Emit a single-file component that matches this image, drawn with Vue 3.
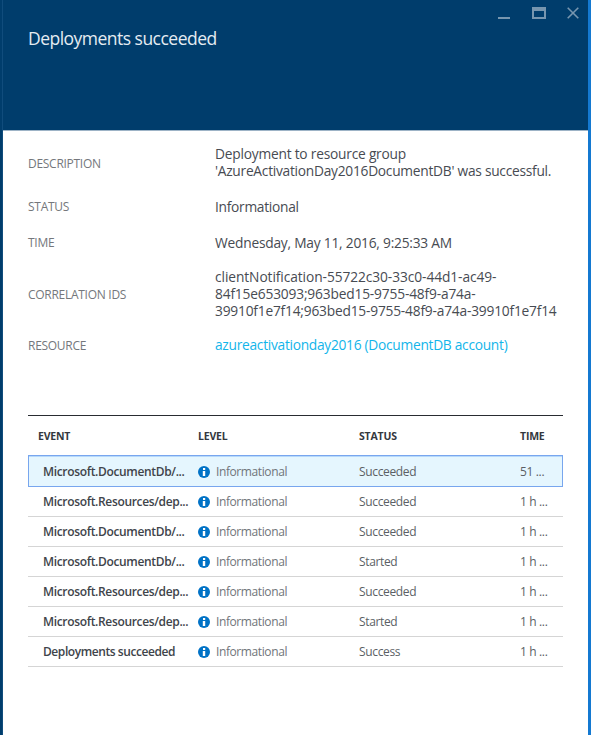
<script setup>
const details = [
  { label: 'DESCRIPTION', cls: 'description', lines: ['Deployment to resource group', "'AzureActivationDay2016DocumentDB' was successful."] },
  { label: 'STATUS', cls: 'status', lines: ['Informational'] },
  { label: 'TIME', cls: 'time', lines: ['Wednesday, May 11, 2016, 9:25:33 AM'] },
  { label: 'CORRELATION IDS', cls: 'correlation', lines: ['clientNotification-55722c30-33c0-44d1-ac49-', '84f15e653093;963bed15-9755-48f9-a74a-', '39910f1e7f14;963bed15-9755-48f9-a74a-39910f1e7f14'] },
  { label: 'RESOURCE', cls: 'resource', lines: ['azureactivationday2016 (DocumentDB account)'] }
]
const db = 'Microsoft.DocumentDb/...'
const res = 'Microsoft.Resources/dep...'
const events = [
  { event: db, status: 'Succeeded', time: '51 ...', selected: true },
  { event: res, status: 'Succeeded', time: '1 h ...' },
  { event: db, status: 'Succeeded', time: '1 h ...' },
  { event: db, status: 'Started', time: '1 h ...' },
  { event: res, status: 'Succeeded', time: '1 h ...' },
  { event: res, status: 'Started', time: '1 h ...' },
  { event: 'Deployments succeeded', status: 'Success', time: '1 h ...', final: true }
]
</script>

<template>
  <div class="shell">
    <div class="edge-left"></div>
    <main class="blade">
      <header class="head">
        <div class="controls">
          <svg width="12" height="14" viewBox="0 0 12 14"><path d="M0 12h12" stroke="#7796af" stroke-width="2" /></svg>
          <svg width="14" height="14" viewBox="0 0 14 14"><path fill="#7796af" fill-rule="evenodd" d="M0 1h14v12H0zM2 5v6h10V5z" /></svg>
          <svg width="12" height="14" viewBox="0 0 12 14"><path d="M.7 1.7l10.6 10.6M11.3 1.7L.7 12.3" stroke="#7796af" stroke-width="1.6" /></svg>
        </div>
        <h1>Deployments succeeded</h1>
      </header>
      <dl class="details">
        <div v-for="d in details" :key="d.label" class="detail" :class="d.cls">
          <dt>{{ d.label }}</dt>
          <dd><div v-for="l in d.lines" :key="l">{{ l }}</div></dd>
        </div>
      </dl>
      <section class="table">
        <div class="row thead"><span>EVENT</span><span>LEVEL</span><span>STATUS</span><span>TIME</span></div>
        <div v-for="(e, i) in events" :key="i" class="row" :class="{ selected: e.selected }">
          <span class="event" :class="{ final: e.final }">{{ e.event }}</span>
          <span class="level">
            <svg width="12" height="12" viewBox="0 0 12 12"><circle cx="6" cy="6" r="6" fill="#0072c6" /><path d="M5 2h2.2v2H5zM4.8 5h2.4v5H4.8z" fill="#fff" /></svg>
            <span>Informational</span>
          </span>
          <span class="state">{{ e.status }}</span>
          <span class="when">{{ e.time }}</span>
        </div>
      </section>
    </main>
    <div class="edge-right"></div>
  </div>
</template>

<style>
body { margin: 0; overflow: hidden; }
</style>

<style scoped>
.shell { display: flex; width: 591px; height: 735px; background: #fff; font-family: "Open Sans", "Noto Sans", sans-serif; color: #474b52; }
.edge-left { width: 3px; background: linear-gradient(90deg, #003d6c 0 2px, #104c7c 2px); }
.edge-right { width: 3px; background: #1479d1; }
.blade { width: 585px; }
.head { box-sizing: border-box; height: 131px; background: #003d6c; border-bottom: 1px solid #9db3c6; }
.controls { display: flex; justify-content: flex-end; gap: 21px; padding: 6px 9px 0 0; height: 14px; }
.controls svg:first-child { margin-right: 1px; }
h1 { margin: 6px 0 0 25px; font-size: 17.5px; line-height: 24px; font-weight: 400; color: #e5ecf2; letter-spacing: -.52px; white-space: nowrap; }
.details { margin: 0; padding: 14px 0 0 25px; height: 269px; box-sizing: border-box; }
.detail { display: grid; grid-template-columns: 187px 1fr; align-items: center; }
.description { height: 34px; margin-bottom: 18px; }
.description dt { padding-top: 2px; }
.status { height: 18px; margin-bottom: 18px; }
.time { height: 18px; margin-bottom: 17px; }
.correlation { height: 51px; margin-bottom: 16px; }
.correlation dt { padding-top: 2px; }
.resource { height: 18px; }
.resource dt { padding-top: 2px; }
dt { font-size: 12px; line-height: 17px; letter-spacing: -.28px; color: #74777c; }
dd { margin: 0; font-size: 13.75px; line-height: 17px; letter-spacing: -.22px; white-space: nowrap; }
.status dd { letter-spacing: -.28px; }
.description dd div:last-child { letter-spacing: -.26px; }
.correlation dd { letter-spacing: -.2px; }
.correlation dd div:first-child { letter-spacing: -.08px; }
.correlation dd div:nth-child(2) { letter-spacing: -.17px; }
.resource dd { color: #12b5ea; letter-spacing: -.28px; }
.table { margin: 15px 25px 0; border-top: 1px solid #292c31; width: 535px; }
.row { box-sizing: border-box; display: grid; grid-template-columns: 170px 161px 161px 43px; align-items: center; height: 30px; border-bottom: 1px solid #d5d5d5; font-size: 12px; line-height: 16px; white-space: nowrap; }
.thead { height: 39px; padding-left: 10px; grid-template-columns: 160px 161px 161px 43px; border: 0; font-size: 10.5px; letter-spacing: -.2px; font-weight: 700; color: #34383e; }
.selected { height: 32px; background: #e5f6fe; border: 1px solid #78a6ee; box-shadow: inset 0 1px #b6d9fb; grid-template-columns: 169px 161px 161px 42px; padding-top: 1px; }
.event { padding-left: 15px; font-weight: 600; color: #40444a; letter-spacing: -.34px; }
.final { letter-spacing: -.43px; }
.selected .event { padding-left: 14px; }
.level { display: flex; align-items: center; gap: 6px; color: #707479; letter-spacing: -.4px; }
.state, .when { color: #5b5f65; letter-spacing: -.35px; }
</style>
